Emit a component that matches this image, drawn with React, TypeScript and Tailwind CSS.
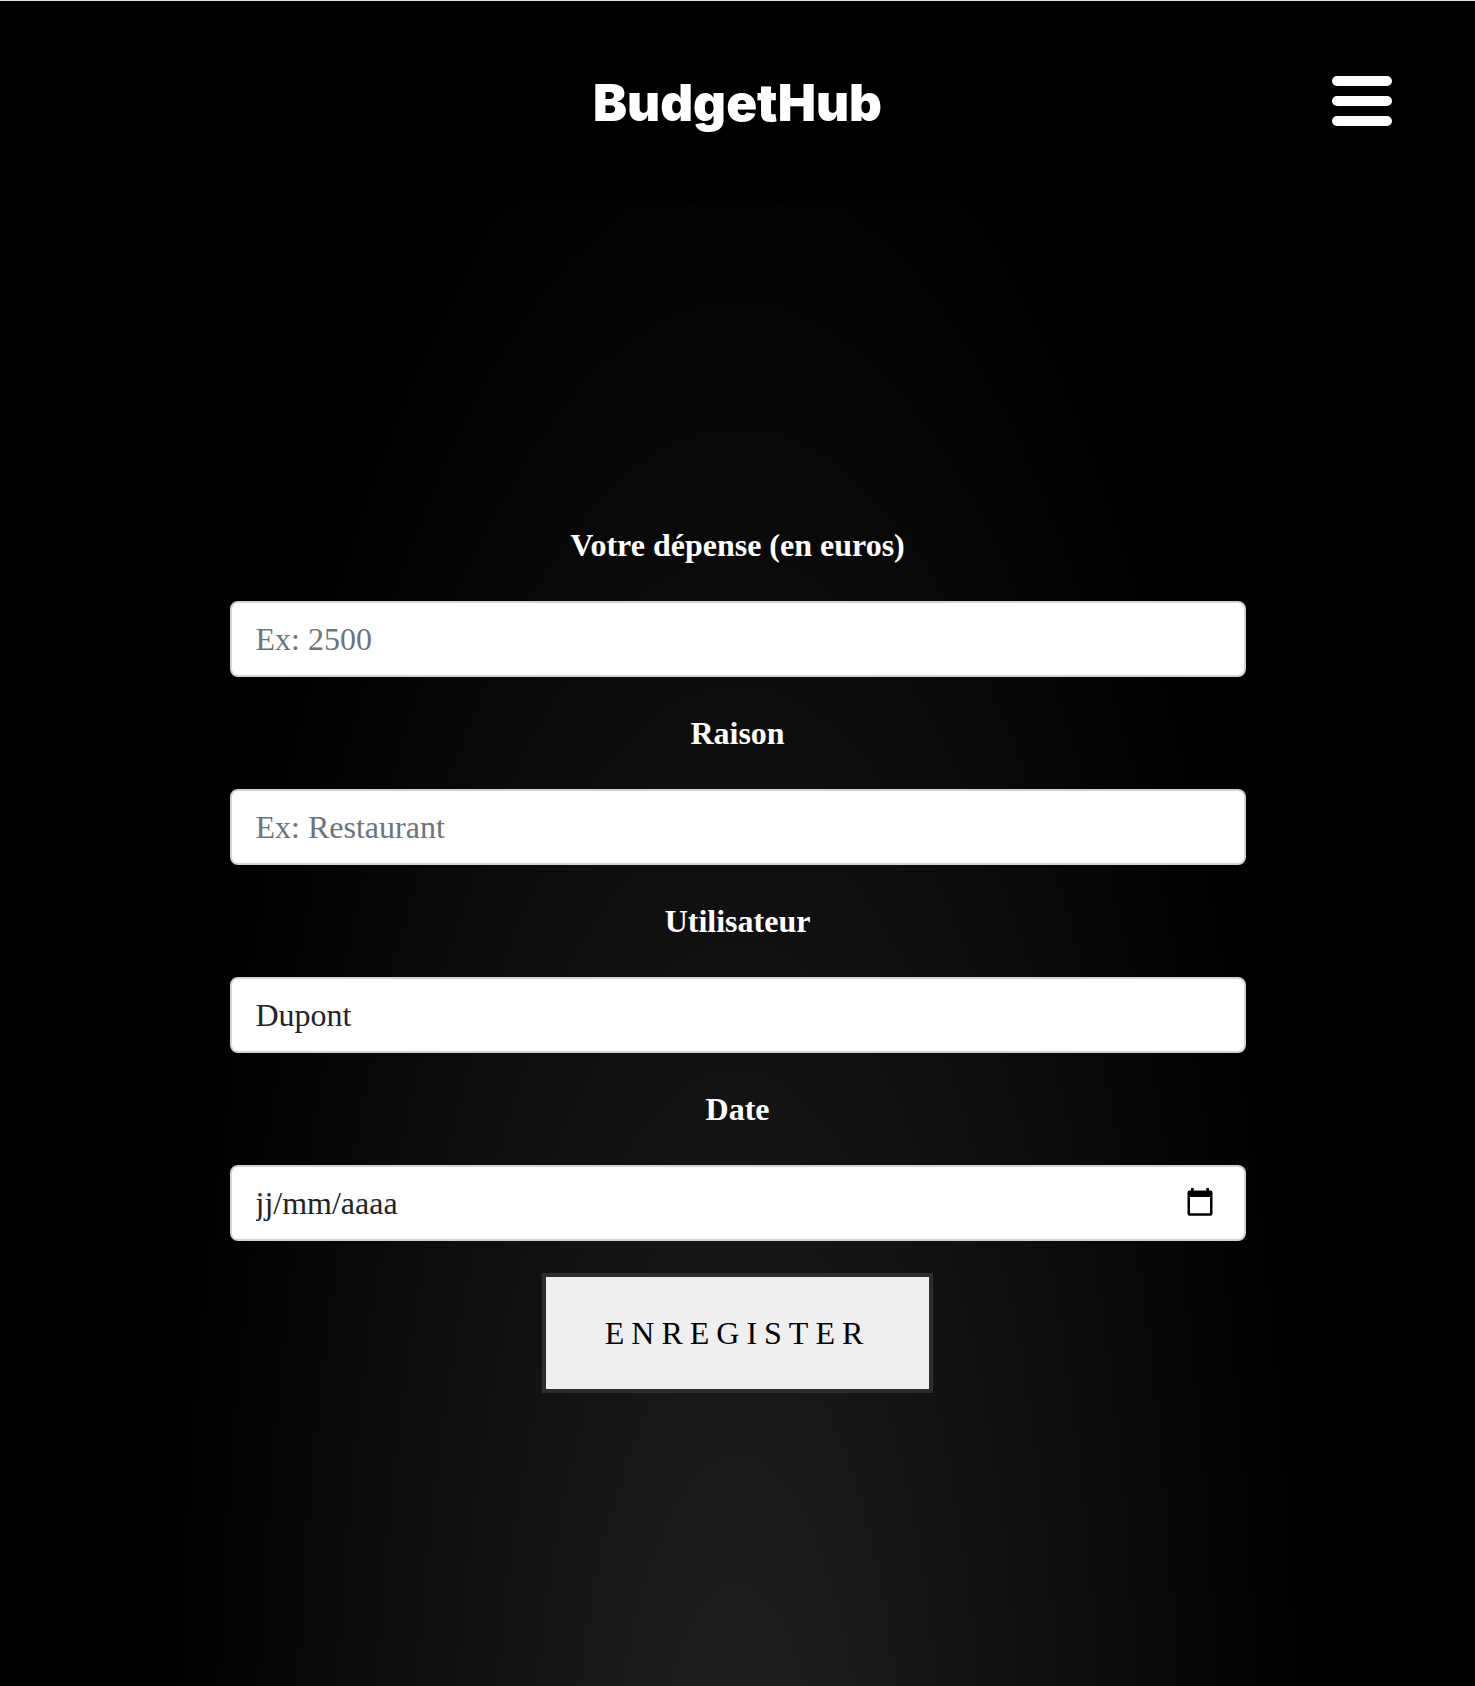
import { useState } from "react";
import type { ReactNode } from "react";

const control =
  "block h-[76px] w-full appearance-none rounded-lg border-2 border-[#ced4da] bg-white px-6 text-[32px] leading-[48px] text-[#212529] outline-none focus:border-[#86b7fe]";

function Header() {
  return (
    <header className="flex h-[201px] items-center border-t border-[#dee2e6] bg-black px-[83px]">
      <div className="w-[60px]" />
      <h1 className="flex-1 pt-1 text-center font-[Inter,sans-serif] text-[51px] leading-[60px] font-black text-white">
        BudgetHub
      </h1>
      <button type="button" aria-label="Menu" className="flex w-[60px] flex-col gap-[10px]">
        <span className="h-[10px] w-full rounded-full bg-white" />
        <span className="h-[10px] w-full rounded-full bg-white" />
        <span className="h-[10px] w-full rounded-full bg-white" />
      </button>
    </header>
  );
}

function Field({ id, label, children }: { id: string; label: string; children: ReactNode }) {
  return (
    <div className="flex w-full flex-col items-center gap-8">
      <label htmlFor={id} className="text-[32px] leading-[48px] font-bold text-white">
        {label}
      </label>
      {children}
    </div>
  );
}

function CalendarIcon() {
  return (
    <svg viewBox="0 0 26 28" className="h-7 w-[26px]" aria-hidden="true">
      <path
        fill="#000"
        fillRule="evenodd"
        d="M4 0h2.700v2.500h12.600V0H22v2.500h1.500a2 2 0 0 1 2 2v21.300a2 2 0 0 1-2 2h-21a2 2 0 0 1-2-2V4.500a2 2 0 0 1 2-2H4zM3 9v16.200h20V9z"
      />
    </svg>
  );
}

export default function App() {
  const [date, setDate] = useState("");

  return (
    <div className="flex min-h-screen flex-col bg-black font-['Liberation_Serif',serif]">
      <Header />
      <main className="flex flex-1 flex-col items-center bg-[radial-gradient(40%_130%_at_50%_113%,#202020_0%,#000_100%)] px-6 pt-[320px] pb-[293px]">
        <form className="flex w-full max-w-[1016px] flex-col items-center gap-8" onSubmit={(e) => e.preventDefault()}>
          <Field id="amount" label="Votre dépense (en euros)">
            <input id="amount" type="text" inputMode="decimal" placeholder="Ex: 2500" className={`${control} placeholder:text-[#6c757d]`} />
          </Field>
          <Field id="reason" label="Raison">
            <input id="reason" type="text" placeholder="Ex: Restaurant" className={`${control} placeholder:text-[#6c757d]`} />
          </Field>
          <Field id="user" label="Utilisateur">
            <select id="user" className={control}>
              <option>Dupont</option>
            </select>
          </Field>
          <Field id="date" label="Date">
            <div className="relative w-full">
              <input
                id="date"
                type="text"
                value={date}
                onChange={(e) => setDate(e.target.value)}
                placeholder="jj/mm/aaaa"
                className={`${control} placeholder:text-[#212529]`}
              />
              <button type="button" aria-label="Ouvrir le calendrier" className="absolute inset-y-0 right-[33px] flex items-center pb-0.5">
                <CalendarIcon />
              </button>
            </div>
          </Field>
          <button
            type="submit"
            className="h-[120px] border-4 border-[#2d2d2d] bg-[#efefef] px-[59px] text-[32px] leading-[48px] tracking-[7px] text-black uppercase"
          >
            Enregister
          </button>
        </form>
      </main>
    </div>
  );
}
